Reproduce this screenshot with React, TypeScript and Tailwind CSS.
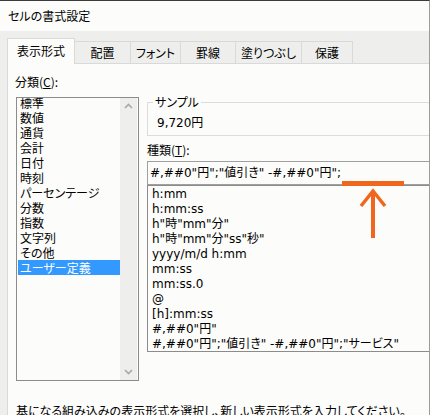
import React from "react";

const jp = "font-['Noto_Sans_CJK_JP',sans-serif] [font-feature-settings:'palt']";
const mono = "font-['DejaVu_Sans','Noto_Sans_CJK_JP',sans-serif] [font-feature-settings:'palt']";

const tabs = [
  { label: "配置", w: "w-[56px]" },
  { label: "フォント", w: "w-[50px]" },
  { label: "罫線", w: "w-[55px]" },
  { label: "塗りつぶし", w: "w-[66px]" },
  { label: "保護", w: "w-[51px]" },
];

const categories = [
  "標準",
  "数値",
  "通貨",
  "会計",
  "日付",
  "時刻",
  "パーセンテージ",
  "分数",
  "指数",
  "文字列",
  "その他",
  "ユーザー定義",
];

const formats = [
  "h:mm",
  "h:mm:ss",
  'h"時"mm"分"',
  'h"時"mm"分"ss"秒"',
  "yyyy/m/d h:mm",
  "mm:ss",
  "mm:ss.0",
  "@",
  "[h]:mm:ss",
  '#,##0"円"',
  '#,##0"円";"値引き" -#,##0"円";"サービス"',
];

const Chevron = ({ down }: { down?: boolean }) => (
  <svg width="9" height="6" viewBox="0 0 9 6" className="mx-auto">
    <polyline
      points={down ? "1,1 4.5,4.5 8,1" : "1,5 4.5,1.5 8,5"}
      fill="none"
      stroke="#a8a8a8"
      strokeWidth="1.6"
    />
  </svg>
);

export default function App() {
  return (
    <div
      className={`relative w-[430px] h-[415px] overflow-hidden flex flex-col bg-[#fcfcfa] border-t border-t-[#3a3a3a] border-r border-r-[#9c9c9c] text-[12px] text-black ${jp}`}
    >
      {/* Title bar */}
      <div className="h-[30px] shrink-0 flex items-center pl-[8px] leading-[16px]">
        セルの書式設定
      </div>

      {/* Body */}
      <div className="flex-1 flex flex-col bg-[#eeefed] pl-[7px]">
        {/* Tabs */}
        <div className="relative z-10 h-[32px] shrink-0 flex items-end">
          <div className="w-[68px] h-[26px] -mb-px bg-[#fcfcfa] border-l border-t border-r border-[#d9d9d9] flex items-center justify-center leading-[16px] pb-[1px]">
            表示形式
          </div>
          {tabs.map((t) => (
            <div
              key={t.label}
              className={`${t.w} h-[22px] border-t border-r border-[#d9d9d9] flex items-center justify-center leading-[16px]`}
            >
              {t.label}
            </div>
          ))}
        </div>

        {/* Panel */}
        <div className="flex-1 bg-[#fcfcfa] border-l border-t border-[#d9d9d9]">
          <div className="flex pt-[9px]">
            {/* Category column */}
            <div className="pl-[7px] shrink-0">
              <div className="leading-[18px] h-[18px]">
                分類(<span className="underline">C</span>):
              </div>
              <div className="mt-[6px] ml-[1px] w-[123px] h-[284px] border border-[#8c8c8c] flex">
                <div className="w-[103px] overflow-hidden pl-[1px]">
                  <div className="-mt-[3px]">
                    {categories.map((c) => (
                      <div
                        key={c}
                        className={`h-[15px] leading-[15px] pl-[2px] whitespace-nowrap ${
                          c === "ユーザー定義" ? "bg-[#3399ff] text-white" : ""
                        }`}
                      >
                        {c}
                      </div>
                    ))}
                  </div>
                </div>
                <div className="w-[17px] bg-[#eeefed] flex flex-col justify-between py-[5px]">
                  <Chevron />
                  <Chevron down />
                </div>
              </div>
            </div>

            {/* Right column */}
            <div className="ml-[8px] w-[290px] shrink-0">
              <fieldset className="mt-[21px] border border-[#dcdcdc] pb-[4px]">
                <legend className="ml-[5px] px-[2px] leading-[16px]">サンプル</legend>
                <div className={`pl-[9px] pt-[5px] leading-[16px] ${mono}`}>9,720円</div>
              </fieldset>

              <div className="mt-[6px] leading-[16px] h-[16px]">
                種類(<span className="underline">T</span>):
              </div>
              <div
                className={`mt-[3px] h-[24px] border border-[#a0a0a0] pl-[2px] leading-[22px] whitespace-nowrap ${mono}`}
              >
                #,##0"円";"値引き" -#,##0"円";
              </div>
              <div className={`h-[167px] border border-[#8c8c8c] pl-[4px] pt-[1px] overflow-hidden ${mono}`}>
                {formats.map((f) => (
                  <div key={f} className="h-[15px] leading-[15px] whitespace-nowrap">
                    {f}
                  </div>
                ))}
              </div>
            </div>
          </div>

          <div className="mt-[22px] pl-[8px] leading-[16px] whitespace-nowrap">
            基になる組み込みの表示形式を選択し、新しい表示形式を入力してください。
          </div>
        </div>
      </div>

      {/* Annotation: orange bar and arrow */}
      <div className="absolute left-[342px] top-[180px] w-[62px] h-[5px] bg-[#f0661e]" />
      <svg
        className="absolute left-[355px] top-[186px]"
        width="36"
        height="54"
        viewBox="0 0 36 54"
      >
        <line x1="18" y1="4" x2="18" y2="51" stroke="#f0661e" strokeWidth="4" />
        <polyline
          points="6,19 18,4 30,19"
          fill="none"
          stroke="#f0661e"
          strokeWidth="3.5"
        />
      </svg>
    </div>
  );
}
